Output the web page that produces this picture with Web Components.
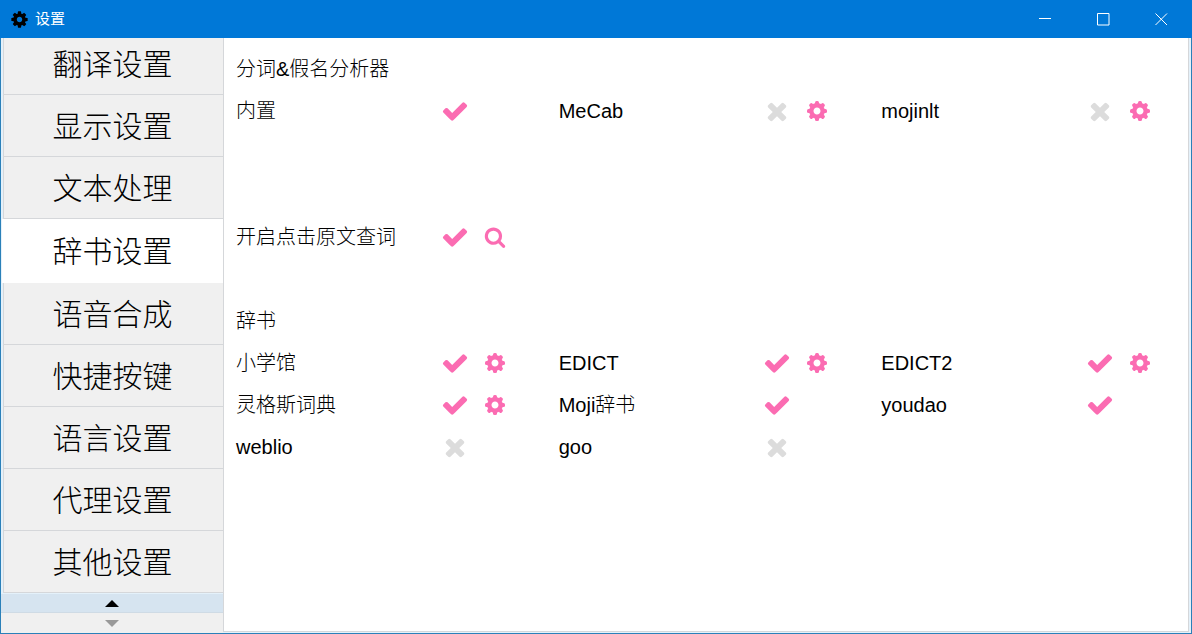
<!DOCTYPE html>
<html lang="zh-CN">
<head>
<meta charset="utf-8">
<title>设置</title>
<style>
html, body {
	height: 100%;
}
body {
	margin: 0;
	font-family: "Liberation Sans", "Noto Sans CJK SC", sans-serif;
	font-weight: 300;
	color: #000;
	--color-brand: #0078d7;
	--color-on: #fb6cb2;
	--color-off: #dcdcdc;
	--color-tab: #f0f0f0;
	--color-line: #d5d7da;
}
</style>
</head>
<body>
<app-window>
	<title-bar slot="title">设置</title-bar>
	<tab-list slot="side">
		<tab-item>翻译设置</tab-item>
		<tab-item>显示设置</tab-item>
		<tab-item>文本处理</tab-item>
		<tab-item selected>辞书设置</tab-item>
		<tab-item>语音合成</tab-item>
		<tab-item>快捷按键</tab-item>
		<tab-item>语言设置</tab-item>
		<tab-item>代理设置</tab-item>
		<tab-item>其他设置</tab-item>
	</tab-list>

	<option-group heading="分词&amp;假名分析器">
		<option-item label="内置" checked></option-item>
		<option-item label="MeCab" action="cog"></option-item>
		<option-item label="mojinlt" action="cog"></option-item>
	</option-group>
	<option-group>
		<option-item label="开启点击原文查词" checked action="search"></option-item>
	</option-group>
	<option-group heading="辞书">
		<option-item label="小学馆" checked action="cog"></option-item>
		<option-item label="EDICT" checked action="cog"></option-item>
		<option-item label="EDICT2" checked action="cog"></option-item>
		<option-item label="灵格斯词典" checked action="cog"></option-item>
		<option-item label="Moji辞书" checked></option-item>
		<option-item label="youdao" checked></option-item>
		<option-item label="weblio"></option-item>
		<option-item label="goo"></option-item>
	</option-group>
</app-window>

<script>
const icons = {
	check: "M1671 566q0 40-28 68l-724 724-136 136q-28 28-68 28t-68-28l-136-136-362-362q-28-28-28-68t28-68l136-136q28-28 68-28t68 28l294 295 656-657q28-28 68-28t68 28l136 136q28 28 28 68z",
	times: "M1490 1322q0 40-28 68l-136 136q-28 28-68 28t-68-28l-294-294-294 294q-28 28-68 28t-68-28l-136-136q-28-28-28-68t28-68l294-294-294-294q-28-28-28-68t28-68l136-136q28-28 68-28t68 28l294 294 294-294q28-28 68-28t68 28l136 136q28 28 28 68t-28 68l-294 294 294 294q28 28 28 68z",
	cog: "M1152 896q0-106-75-181t-181-75-181 75-75 181 75 181 181 75 181-75 75-181zm512-109v222q0 12-8 23t-20 13l-185 28q-19 54-39 91 35 50 107 138 10 12 10 25t-9 23q-27 37-99 108t-94 71q-12 0-26-9l-138-108q-44 23-91 38-16 136-29 186-7 28-36 28h-222q-14 0-24.5-8.5t-11.5-21.5l-28-184q-49-16-90-37l-141 107q-10 9-25 9-14 0-25-11-126-114-165-168-7-10-7-23 0-12 8-23 15-21 51-66.5t54-70.5q-27-50-41-99l-183-27q-13-2-21-12.5t-8-23.5v-222q0-12 8-23t19-13l186-28q14-46 39-92-40-57-107-138-10-12-10-24 0-10 9-23 26-36 98.5-107.5t94.5-71.5q13 0 26 10l138 107q44-23 91-38 16-136 29-186 7-28 36-28h222q14 0 24.5 8.5t11.5 21.5l28 184q49 16 90 37l142-107q9-9 24-9 13 0 25 10 129 119 165 170 7 8 7 22 0 12-8 23-15 21-51 66.5t-54 70.5q26 50 41 98l183 28q13 2 21 12.5t8 23.5z",
	search: "M1216 832q0-185-131.5-316.5t-316.5-131.5-316.5 131.5-131.5 316.5 131.5 316.5 316.5 131.5 316.5-131.5 131.5-316.5zm512 832q0 52-38 90t-90 38q-54 0-90-38l-343-342q-179 124-399 124-143 0-273.5-55.5t-225-150-150-225-55.5-273.5 55.5-273.5 150-225 225-150 273.5-55.5 273.5 55.5 225 150 150 225 55.5 273.5q0 220-124 399l343 343q37 37 37 90z",
};

function icon(name, size) {
	return `<svg class="${name}" viewBox="0 0 1792 1792" width="${size}" height="${size}" aria-hidden="true" focusable="false"><path d="${icons[name]}" /></svg>`;
}

// Open toothed ring used for the per-item settings buttons
function gear(size) {
	const teeth = [0, 45, 90, 135, 180, 225, 270, 315]
		.map((angle) => `<rect x="-2" y="-10" width="4" height="5" rx="1.5" transform="rotate(${angle})" />`)
		.join("");
	return `<svg viewBox="-10 -10 20 20" width="${size}" height="${size}" aria-hidden="true" focusable="false">
		<circle r="5.7" fill="none" stroke="currentColor" stroke-width="4.4" />${teeth}
	</svg>`;
}

const resetButton = `
button {
	appearance: none;
	border: none;
	margin: 0;
	padding: 0;
	background: transparent;
	color: inherit;
	font: inherit;
}
svg {
	display: block;
	fill: currentColor;
}
:focus-visible {
	outline: 2px solid var(--color-brand);
	outline-offset: -2px;
}
`;

class AppWindowElement extends HTMLElement {
	constructor() {
		super().attachShadow({ mode: "open" }).innerHTML = `
<style>
:host {
	display: grid;
	grid-template: auto minmax(0, 1fr) / 223px minmax(0, 1fr);
	height: 100%;
	box-sizing: border-box;
	border: solid #2a80b9;
	border-width: 0 1px 1px;
	background: #e4f1fa;
}
header {
	grid-column: 1 / -1;
	margin: 0 -1px;
}
nav {
	display: grid;
	min-height: 0;
	margin-right: 1px;
}
main {
	margin: 0 2px 1px -1px;
	padding: 10px 28px 0 12px;
	border: solid var(--color-line);
	border-width: 0 1px 1px;
	background: #fff;
	overflow: hidden;
}
::slotted(option-group) {
	margin-bottom: 42px;
}
::slotted(option-group:first-of-type) {
	margin-bottom: 84px;
}
</style>
<header><slot name="title"></slot></header>
<nav><slot name="side"></slot></nav>
<main><slot></slot></main>
`;
	}
}

class TitleBarElement extends HTMLElement {
	constructor() {
		super().attachShadow({ mode: "open" }).innerHTML = `
<style>
${resetButton}
:host {
	display: flex;
	align-items: center;
	height: 38px;
	padding: 0 2px 0 10px;
	background: var(--color-brand);
	color: #fff;
	font-size: 15px;
	font-weight: 400;
}
.cog {
	color: #000;
	margin-right: 6px;
}
.title {
	flex: 1;
	line-height: 18px;
}
button {
	display: grid;
	place-items: center;
	width: 58px;
	height: 38px;
}
button svg {
	fill: none;
	stroke: #fff;
}
</style>
${icon("cog", 19)}
<span class="title"><slot></slot></span>
<button type="button" aria-label="最小化"><svg width="13" height="13"><path d="M0 5.5H12" /></svg></button>
<button type="button" aria-label="最大化"><svg width="13" height="13"><path d="M.5.5H12V12H.5Z" /></svg></button>
<button type="button" aria-label="关闭"><svg width="13" height="13"><path d="M.5.5 12 12M12 .5.5 12" /></svg></button>
`;
	}
}

class TabListElement extends HTMLElement {
	constructor() {
		super().attachShadow({ mode: "open" }).innerHTML = `
<style>
${resetButton}
:host {
	display: flex;
	flex-direction: column;
	min-height: 0;
}
/* scrolled to the end, so the first tab is cut at the top */
.tabs {
	flex: 1;
	min-height: 0;
	display: flex;
	flex-direction: column;
	justify-content: flex-end;
	overflow: hidden;
}
button {
	display: grid;
	place-items: center;
	height: 20px;
	background: var(--color-tab);
	color: #999;
}
.up {
	margin-top: 1px;
	height: 19px;
	box-sizing: border-box;
	border-bottom: 1px solid #cfdbe5;
	background: #d6e4f0;
	color: #000;
}
</style>
<div class="tabs" role="tablist" aria-orientation="vertical"><slot></slot></div>
<button type="button" class="up" aria-label="向上滚动"><svg width="14" height="7"><path d="M0 7 7 0 14 7Z" /></svg></button>
<button type="button" class="down" aria-label="向下滚动"><svg width="14" height="7"><path d="M0 0H14L7 7Z" /></svg></button>
`;
		this.addEventListener("click", this.onClick.bind(this));
	}

	onClick(event) {
		let tab = event.target.closest("tab-item");
		if (tab) {
			this.querySelectorAll("tab-item").forEach((item) => item.toggleAttribute("selected", item === tab));
		}
	}
}

class TabItemElement extends HTMLElement {
	static observedAttributes = ["selected"];

	constructor() {
		super().attachShadow({ mode: "open" }).innerHTML = `
<style>
${resetButton}
:host {
	display: block;
	flex: none;
	height: 62px;
}
button {
	display: block;
	width: 100%;
	height: 100%;
	box-sizing: border-box;
	padding: 2px 2px 0 0;
	border: solid var(--color-line);
	border-width: 0 0 1px 1px;
	background: var(--color-tab);
	font-size: 30px;
	line-height: 58px;
}
:host(:not([selected])) {
	padding-left: 2px;
}
:host([selected]) {
	height: 64px;
	padding-left: 1px;
	margin-right: -1px;
}
:host([selected]) button {
	border-color: #fff;
	background: #fff;
}
</style>
<button type="button" role="tab" aria-selected="false"><slot></slot></button>
`;
	}

	attributeChangedCallback() {
		this.shadowRoot.querySelector("button").setAttribute("aria-selected", this.hasAttribute("selected"));
	}
}

class OptionGroupElement extends HTMLElement {
	connectedCallback() {
		if (this.shadowRoot) return;
		this.attachShadow({ mode: "open" }).innerHTML = `
<style>
:host {
	display: block;
	font-size: 20px;
	line-height: 42px;
}
h2 {
	margin: 0;
	font: inherit;
}
div {
	display: grid;
	grid-template-columns: repeat(3, minmax(0, 1fr));
	column-gap: 44px;
}
</style>
<h2 hidden></h2>
<div><slot></slot></div>
`;
		let heading = this.shadowRoot.querySelector("h2");
		heading.textContent = this.getAttribute("heading");
		heading.hidden = !this.hasAttribute("heading");
	}
}

class OptionItemElement extends HTMLElement {
	connectedCallback() {
		if (this.shadowRoot) return;
		let action = this.getAttribute("action");
		this.attachShadow({ mode: "open" }).innerHTML = `
<style>
${resetButton}
:host {
	display: grid;
	grid-template-columns: minmax(0, 1fr) 40px 40px;
	height: 42px;
	color: inherit;
}
label {
	white-space: nowrap;
}
.toggle, .action {
	display: grid;
	place-items: center;
	color: var(--color-on);
}
.toggle > * {
	grid-area: 1 / 1;
}
input {
	appearance: none;
	width: 28px;
	height: 28px;
	margin: 0;
}
.toggle svg {
	pointer-events: none;
}
.times {
	color: var(--color-off);
}
input:checked ~ .times, input:not(:checked) ~ .check {
	display: none;
}
</style>
<label for="enabled"></label>
<span class="toggle"><input id="enabled" type="checkbox">${icon("check", 28)}${icon("times", 28)}</span>
${action ? `<button type="button" class="action">${action === "cog" ? gear(20) : icon(action, 22)}</button>` : ""}
`;
		let label = this.getAttribute("label");
		this.shadowRoot.querySelector("label").textContent = label;
		this.shadowRoot.querySelector("input").checked = this.hasAttribute("checked");
		if (action) {
			this.shadowRoot.querySelector("button").setAttribute("aria-label", label + (action === "cog" ? " 设置" : " 搜索"));
		}
	}
}

customElements.define("app-window", AppWindowElement);
customElements.define("title-bar", TitleBarElement);
customElements.define("tab-list", TabListElement);
customElements.define("tab-item", TabItemElement);
customElements.define("option-group", OptionGroupElement);
customElements.define("option-item", OptionItemElement);
</script>
</body>
</html>
